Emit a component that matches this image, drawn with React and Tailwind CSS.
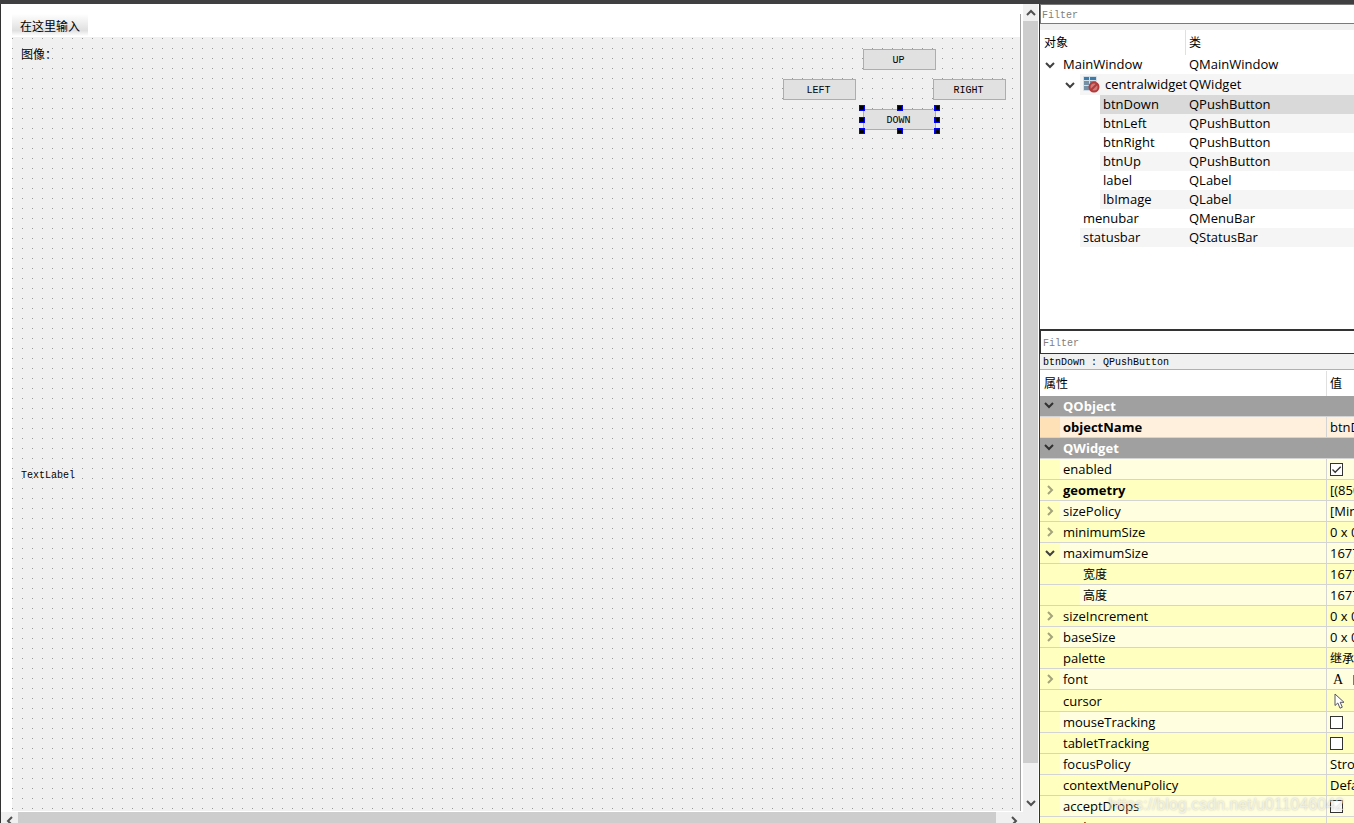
import { useState } from "react";

const PIXEL_FONT = "font-['Liberation_Mono','Noto_Sans_CJK_SC',monospace]";

const treeRows = [
  { name: "MainWindow", type: "QMainWindow", level: 0, open: true },
  { name: "centralwidget", type: "QWidget", level: 1, open: true, icon: true },
  { name: "btnDown", type: "QPushButton", level: 2, selected: true },
  { name: "btnLeft", type: "QPushButton", level: 2 },
  { name: "btnRight", type: "QPushButton", level: 2 },
  { name: "btnUp", type: "QPushButton", level: 2 },
  { name: "label", type: "QLabel", level: 2 },
  { name: "lbImage", type: "QLabel", level: 2 },
  { name: "menubar", type: "QMenuBar", level: 1 },
  { name: "statusbar", type: "QStatusBar", level: 1 },
];

const properties = [
  { name: "QObject", group: true },
  { name: "objectName", value: "btnDown", bold: true, orange: true },
  { name: "QWidget", group: true },
  { name: "enabled", check: true, checked: true, light: true },
  { name: "geometry", value: "[(850, 70), 75 x 23]", bold: true, arrow: "right" },
  { name: "sizePolicy", value: "[Minimum, Fixed, 0, 0]", arrow: "right", light: true },
  { name: "minimumSize", value: "0 x 0", arrow: "right" },
  { name: "maximumSize", value: "16777215 x 16777215", arrow: "down", light: true },
  { name: "宽度", value: "16777215", child: true },
  { name: "高度", value: "16777215", child: true, light: true },
  { name: "sizeIncrement", value: "0 x 0", arrow: "right" },
  { name: "baseSize", value: "0 x 0", arrow: "right", light: true },
  { name: "palette", value: "继承", cjk: true },
  { name: "font", font: true, arrow: "right", light: true },
  { name: "cursor", cursor: true },
  { name: "mouseTracking", check: true, light: true },
  { name: "tabletTracking", check: true },
  { name: "focusPolicy", value: "StrongFocus", light: true },
  { name: "contextMenuPolicy", value: "DefaultContextMenu" },
  { name: "acceptDrops", check: true, light: true },
  { name: "toolTip", value: "" },
];

const chevrons = {
  down: "M1 3 L5 7 L9 3",
  up: "M1 7 L5 3 L9 7",
  right: "M3 1 L7 5 L3 9",
  left: "M7 1 L3 5 L7 9",
};

const Chevron = ({ dir, color = "#404040" }) => (
  <svg width="10" height="10" viewBox="0 0 10 10" fill="none" stroke={color} strokeWidth="2" className="shrink-0">
    <path d={chevrons[dir]} />
  </svg>
);

const WidgetIcon = () => (
  <svg width="17" height="17" viewBox="0 0 17 17" className="shrink-0">
    <rect x="0" y="0" width="14" height="15" rx="1" fill="#d3dee7" />
    <rect x="1" y="1" width="5" height="3" fill="#3f7ba8" />
    <rect x="7" y="1" width="6" height="3" fill="#3f7ba8" />
    <rect x="1" y="5" width="5" height="4" fill="#7590a5" />
    <rect x="7" y="5" width="6" height="4" fill="#7590a5" />
    <rect x="1" y="10" width="6" height="4" fill="#7590a5" />
    <circle cx="11" cy="11" r="4.5" fill="#d07b78" stroke="#b23a3a" strokeWidth="2" />
    <path d="M8 14 L14 8" stroke="#b23a3a" strokeWidth="2" />
  </svg>
);

const CursorIcon = () => (
  <svg width="12" height="17" viewBox="0 0 12 17">
    <path
      d="M1 1 V12.5 L3.8 10 L6 15.2 L8.3 14.2 L6.2 9.3 H10 Z"
      fill="#fff"
      stroke="#55556a"
      strokeWidth="1"
    />
  </svg>
);

const DesignButton = ({ children, className = "" }) => (
  <button
    type="button"
    className={`h-[21px] w-[73px] border border-[#adadad] bg-[#e1e1e1] pt-[3px] pr-[2px] text-center text-[10px] leading-4 ${className}`}
  >
    {children}
  </button>
);

// Eight resize grips around the selected widget, the middle cell stays empty
const Selection = () => (
  <div className="pointer-events-none absolute top-[68px] left-[847px] grid h-[29px] w-[81px] grid-cols-[6px_6px_6px] content-between justify-between">
    {[0, 1, 2, 3, 4, 5, 6, 7, 8].map((i) => (
      <span key={i} className={i === 4 ? "size-[6px]" : "size-[6px] border border-[#0000ff] bg-black"} />
    ))}
  </div>
);

const FormEditor = () => (
  <div className="mt-[10px] mr-px ml-[11px] flex min-h-0 flex-1 flex-col border-r border-[#a0a0a0]">
    <div className="h-[23px] shrink-0">
      <button
        type="button"
        className="h-[22px] bg-linear-to-b from-white via-[#e0e0e0] via-75% to-white px-2 pt-[3px] text-[12px] leading-[18px]"
      >
        在这里输入
      </button>
    </div>
    <div
      className={`relative min-h-0 flex-1 overflow-hidden bg-[#f0f0f0] bg-[conic-gradient(from_270deg_at_1px_1px,#989898_90deg,transparent_0)] bg-size-[10px_10px] bg-position-[0_1px] ${PIXEL_FONT}`}
    >
      <span className="absolute top-[10px] left-[9px] text-[12px] leading-[18px]">图像：</span>
      <DesignButton className="absolute top-3 left-[851px]">UP</DesignButton>
      <DesignButton className="absolute top-[42px] left-[771px]">LEFT</DesignButton>
      <DesignButton className="absolute top-[42px] left-[921px]">RIGHT</DesignButton>
      <DesignButton className="absolute top-[72px] left-[851px]">DOWN</DesignButton>
      <Selection />
      <span className="absolute top-[430px] left-[9px] text-[10px] leading-[18px]">TextLabel</span>
    </div>
  </div>
);

const VerticalScroll = () => (
  <div className="flex w-[15px] shrink-0 flex-col bg-[#f0f0f0] pb-px">
    <button type="button" aria-label="Scroll up" className="flex h-[17px] items-center justify-center">
      <Chevron dir="up" color="#505050" />
    </button>
    <div className="flex-1">
      <div className="h-[96%] bg-[#cdcdcd]" />
    </div>
    <button type="button" aria-label="Scroll down" className="flex h-[17px] items-center justify-center">
      <Chevron dir="down" color="#505050" />
    </button>
  </div>
);

const HorizontalScroll = () => (
  <div className="flex h-[11px] shrink-0 items-start overflow-hidden bg-[#f0f0f0] pr-4">
    <button type="button" aria-label="Scroll left" className="flex size-[17px] shrink-0 items-center justify-center">
      <Chevron dir="left" color="#505050" />
    </button>
    <div className="flex-1 pr-[9px]">
      <div className="h-[17px] bg-[#cdcdcd]" />
    </div>
    <button type="button" aria-label="Scroll right" className="flex size-[17px] shrink-0 items-center justify-center">
      <Chevron dir="right" color="#505050" />
    </button>
  </div>
);

const ObjectTree = () => (
  <div className="flex h-[325px] shrink-0 flex-col bg-white">
    <input
      type="text"
      aria-label="Filter objects"
      placeholder="Filter"
      className={`h-5 w-full shrink-0 border border-r-0 border-[#7a7a7a] bg-white px-px pt-[2px] text-[10px] outline-none placeholder:text-[#808080] ${PIXEL_FONT}`}
    />
    <div className="h-[6px] shrink-0 bg-[#f0f0f0]" />
    <table className="w-full table-fixed border-collapse text-left leading-[17px]">
      <colgroup>
        <col className="w-[146px]" />
        <col />
      </colgroup>
      <thead>
        <tr className="text-[12px]">
          <th className="p-0 font-normal">
            <div className="flex h-[25px] items-center border-r border-[#e0e0e0] pl-1">对象</div>
          </th>
          <th className="p-0 pl-[3px] font-normal">类</th>
        </tr>
      </thead>
      <tbody>
        {treeRows.map((row, i) => {
          const bg = row.selected ? "bg-[#d9d9d9]" : i % 2 ? "bg-[#f5f5f5]" : "bg-white";
          const indent = ["w-0", "w-5", "w-10"][row.level];
          return (
            <tr key={row.name}>
              <td className="p-0">
                <div className={row.icon ? "flex h-[21px]" : "flex h-[19px]"}>
                  <span className={`shrink-0 ${indent}`} />
                  <span className="flex w-5 shrink-0 items-center pl-[5px]">
                    {row.open && <Chevron dir="down" />}
                  </span>
                  <span className={`flex flex-1 items-center gap-[5px] pl-[3px] whitespace-nowrap ${bg}`}>
                    {row.icon && <WidgetIcon />}
                    {row.name}
                  </span>
                </div>
              </td>
              <td className={`p-0 pl-[3px] ${bg}`}>{row.type}</td>
            </tr>
          );
        })}
      </tbody>
    </table>
  </div>
);

const CheckCell = ({ row }) => {
  const [checked, setChecked] = useState(!!row.checked);
  return (
    <span className="relative block size-[13px]">
      <input
        type="checkbox"
        aria-label={row.name}
        checked={checked}
        onChange={() => setChecked(!checked)}
        className="block size-[13px] appearance-none border border-[#333] bg-white"
      />
      {checked && (
        <svg viewBox="0 0 13 13" className="pointer-events-none absolute inset-0" fill="none" stroke="#333" strokeWidth="1.3">
          <path d="M2.5 6.5 L5.2 9.3 L10.7 3.7" />
        </svg>
      )}
    </span>
  );
};

const PropertyValue = ({ row }) => {
  if (row.check) return <CheckCell row={row} />;
  if (row.cursor) return <span className="block pt-px pl-1"><CursorIcon /></span>;
  if (row.font) {
    return (
      <span className="flex items-center pt-[2px] pl-[3px] font-['Liberation_Serif',serif] text-[14px]">
        A<span className="ml-[10px] h-[10px] w-3 shrink-0 bg-[#b86a1c]" />
      </span>
    );
  }
  if (row.cjk) return <span className="pt-[2px] text-[12px]">{row.value}</span>;
  return row.value;
};

const PropertyRow = ({ row }) => {
  if (row.group) {
    return (
      <tr>
        <th colSpan={2} className="p-0 text-left font-bold text-white">
          <div className="flex h-[21px] items-center border-b border-[#d4d4d4] bg-[#a0a0a0]">
            <span className="flex w-[23px] pb-[3px] pl-1">
              <Chevron dir="down" color="#303030" />
            </span>
            {row.name}
          </div>
        </th>
      </tr>
    );
  }

  const dark = row.orange ? "bg-[#ffe1b8]" : "bg-[#ffffbf]";
  const bg = row.orange ? "bg-[#fff0de]" : row.light ? "bg-[#ffffdf]" : "bg-[#ffffbf]";
  const height = row.cursor ? "h-[22px]" : "h-[21px]";

  return (
    <tr>
      <td className="p-0">
        <div className={`flex border-r border-b border-[#d4d4d4] ${height} ${dark}`}>
          <span className={`flex shrink-0 items-center pl-[5px] ${row.child ? "w-10" : "w-5"}`}>
            {row.arrow && <Chevron dir={row.arrow} color={row.arrow === "right" ? "#a3a37c" : "#404040"} />}
          </span>
          <span className={`flex flex-1 items-center pl-[3px] ${bg} ${row.bold ? "font-bold" : ""} ${row.child ? "pt-[2px] text-[12px]" : ""}`}>
            {row.name}
          </span>
        </div>
      </td>
      <td className="p-0">
        <div className={`flex items-center overflow-hidden border-b border-[#d4d4d4] pl-[3px] whitespace-nowrap ${height} ${bg}`}>
          <PropertyValue row={row} />
        </div>
      </td>
    </tr>
  );
};

const PropertyEditor = () => (
  <div className="flex min-h-0 flex-1 flex-col overflow-hidden border-t border-[#333] bg-white">
    <input
      type="text"
      aria-label="Filter properties"
      placeholder="Filter"
      className={`h-6 w-full shrink-0 border border-r-0 border-[#333] bg-white px-[2px] pt-[2px] text-[10px] outline-none placeholder:text-[#808080] ${PIXEL_FONT}`}
    />
    <div className={`h-4 shrink-0 border-b border-[#b0b0b0] bg-[#f0f0f0] pl-[3px] text-[10px] leading-[18px] ${PIXEL_FONT}`}>
      btnDown : QPushButton
    </div>
    <div className="mt-px min-h-0 flex-1 overflow-hidden">
      <table className="w-full table-fixed border-collapse text-left">
        <colgroup>
          <col className="w-[287px]" />
          <col />
        </colgroup>
        <thead>
          <tr className="text-[12px]">
            <th className="p-0 font-normal">
              <div className="flex h-[25px] items-center border-r border-[#e0e0e0] pl-1">属性</div>
            </th>
            <th className="p-0 pl-[3px] font-normal">值</th>
          </tr>
        </thead>
        <tbody>
          {properties.map((row) => (
            <PropertyRow key={row.name} row={row} />
          ))}
        </tbody>
      </table>
    </div>
  </div>
);

const App = () => {
  return (
    <div className="relative flex h-screen overflow-hidden border-t-4 border-[#3f3f41] bg-white font-['Open_Sans','Noto_Sans_CJK_SC',sans-serif] text-[13px] leading-[18px] text-black">
      <main className="flex min-w-0 flex-1 flex-col border-l border-[#333]">
        <div className="flex min-h-0 flex-1">
          <div className="mb-px flex min-w-0 flex-1 flex-col">
            <FormEditor />
          </div>
          <div className="ml-px flex">
            <VerticalScroll />
          </div>
        </div>
        <HorizontalScroll />
      </main>
      <aside className="ml-px flex w-[315px] shrink-0 flex-col border-l border-[#333]">
        <ObjectTree />
        <PropertyEditor />
      </aside>
      <div className="pointer-events-none absolute right-[10px] bottom-2 font-['Liberation_Sans',sans-serif] text-[16px] leading-5 text-white/60 [text-shadow:0_0_2px_rgb(0_0_0/0.25)]">
        https://blog.csdn.net/u011046042
      </div>
    </div>
  );
};

export default App;
